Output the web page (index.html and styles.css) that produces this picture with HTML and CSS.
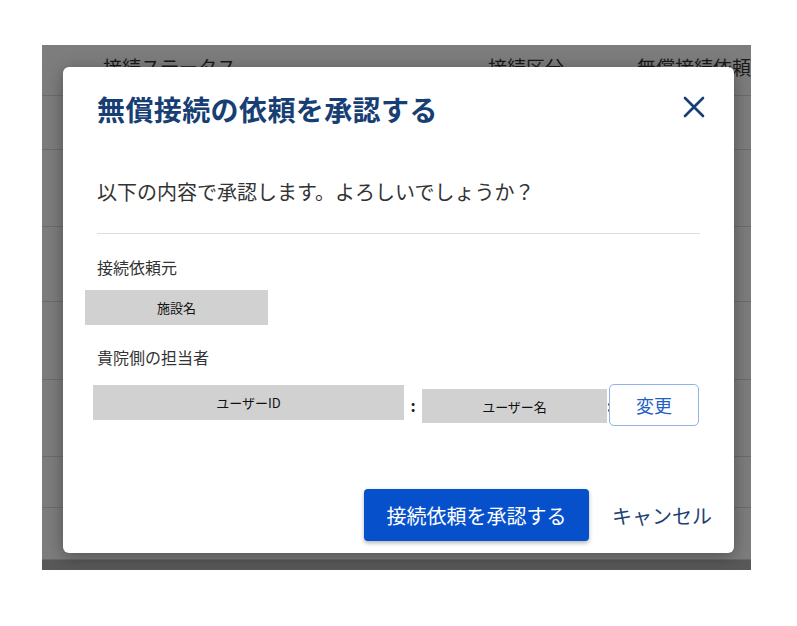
FILE: index.html
```html
<!DOCTYPE html>
<html lang="ja">
<head>
<meta charset="utf-8">
<title>無償接続の依頼を承認する</title>
<link rel="stylesheet" href="styles.css">
</head>
<body>
<div class="stage">
  <div class="table">
    <div class="row head">
      <span class="c1">接続ステータス</span>
      <span class="c2">接続区分</span>
      <span class="c3">無償接続依頼</span>
    </div>
    <div class="row r2"></div>
    <div class="row r3"></div>
    <div class="row r4"></div>
    <div class="row r5"></div>
    <div class="row r6"></div>
    <div class="row r7"></div>
    <div class="row r8"></div>
    <div class="band"></div>
  </div>

  <div class="modal">
    <div class="modal-head">
      <h1 class="title">無償接続の依頼を承認する</h1>
      <svg class="close" width="28" height="28" viewBox="0 0 28 28" aria-label="閉じる">
        <path d="M5 5 L23 23 M23 5 L5 23" stroke="#173f74" stroke-width="2.6" stroke-linecap="round" fill="none"/>
      </svg>
    </div>
    <p class="message">以下の内容で承認します。よろしいでしょうか？</p>
    <div class="divider"></div>
    <div class="label first">接続依頼元</div>
    <div class="chip facility">施設名</div>
    <div class="label second">貴院側の担当者</div>
    <div class="person">
      <div class="chip uid">ユーザーID</div>
      <span class="colon">:</span>
      <div class="chip uname">ユーザー名</div>
      <span class="colon thin">:</span>
      <button class="change">変更</button>
    </div>
    <div class="footer">
      <button class="primary">接続依頼を承認する</button>
      <button class="cancel">キャンセル</button>
    </div>
  </div>
</div>
</body>
</html>
```

FILE: styles.css
```css
* { box-sizing: border-box; }

html, body {
  margin: 0;
  padding: 0;
  background: #ffffff;
  font-family: "Noto Sans CJK JP", "Noto Sans", sans-serif;
}

.stage {
  position: relative;
  margin: 45px 0 0 42px;
  width: 709px;
  height: 525px;
  background: #7d7d7d;
  overflow: hidden;
}

.table {
  display: flex;
  flex-direction: column;
}

.row {
  border-bottom: 1px solid #6c6c6c;
  flex: none;
}

.head {
  height: 51px;
  display: flex;
  padding: 12px 0 0 61px;
  font-size: 19px;
  line-height: 19px;
  color: #1a1a1a;
  white-space: nowrap;
}
.head .c1 { width: 385px; flex: none; }
.head .c2 { width: 149px; flex: none; }
.head .c3 { flex: none; }

.r2 { height: 54px; }
.r3 { height: 77px; }
.r4 { height: 75px; }
.r5 { height: 78px; }
.r6 { height: 77px; }
.r7 { height: 51px; }
.r8 { height: 51px; border-bottom: none; }

.band {
  height: 11px;
  background: #595959;
  border-top: 1px solid #6a6a6a;
}

.modal {
  position: absolute;
  left: 21px;
  top: 22px;
  width: 671px;
  height: 486px;
  background: #ffffff;
  border-radius: 6px;
  box-shadow: 0 4px 18px rgba(0, 0, 0, 0.35);
  padding: 22px 34px 12px 34px;
  display: flex;
  flex-direction: column;
}

.modal-head {
  display: flex;
  justify-content: space-between;
  align-items: flex-start;
  height: 40px;
}

.title {
  margin: 0;
  font-size: 28px;
  line-height: 40px;
  font-weight: 700;
  color: #173f74;
  letter-spacing: 0.4px;
}

.close {
  margin-top: 4px;
  margin-right: -8px;
  flex: none;
}

.message {
  margin: 48px 0 0 0;
  font-size: 20px;
  line-height: 30px;
  color: #333333;
}

.divider {
  margin-top: 26px;
  height: 1px;
  background: #dedede;
}

.label {
  font-size: 16px;
  line-height: 24px;
  color: #333333;
}
.label.first { margin-top: 21px; }
.label.second { margin-top: 20px; }

.chip {
  background: #d1d1d1;
  color: #111111;
  font-size: 13px;
  display: flex;
  align-items: center;
  justify-content: center;
  flex: none;
}

.facility {
  margin-top: 11px;
  margin-left: -12px;
  width: 183px;
  height: 35px;
}

.person {
  margin-top: 15px;
  display: flex;
  align-items: flex-start;
  height: 42px;
}

.uid {
  margin-left: -4px;
  margin-top: 1px;
  width: 311px;
  height: 35px;
}

.colon {
  width: 18px;
  flex: none;
  text-align: center;
  font-size: 16px;
  font-weight: 700;
  color: #222222;
  line-height: 42px;
}

.colon.thin {
  width: 2px;
  text-align: left;
  overflow: visible;
}

.uname {
  margin-top: 5px;
  width: 185px;
  height: 34px;
}

.change {
  flex: none;
  width: 90px;
  height: 42px;
  background: #ffffff;
  border: 1px solid #8fb3ea;
  border-radius: 5px;
  color: #1f5fc6;
  font-family: inherit;
  font-size: 18px;
  padding: 0;
}

.footer {
  margin-top: 63px;
  margin-right: -12px;
  display: flex;
  justify-content: flex-end;
  align-items: center;
}

.primary {
  width: 225px;
  height: 52px;
  background: #0651cb;
  color: #ffffff;
  border: none;
  border-radius: 4px;
  font-family: inherit;
  font-size: 20px;
  padding: 0;
  box-shadow: 0 2px 4px rgba(0, 0, 0, 0.3);
}

.cancel {
  margin-left: 23px;
  background: none;
  border: none;
  padding: 0;
  font-family: inherit;
  font-size: 20px;
  color: #1e4172;
}
```
